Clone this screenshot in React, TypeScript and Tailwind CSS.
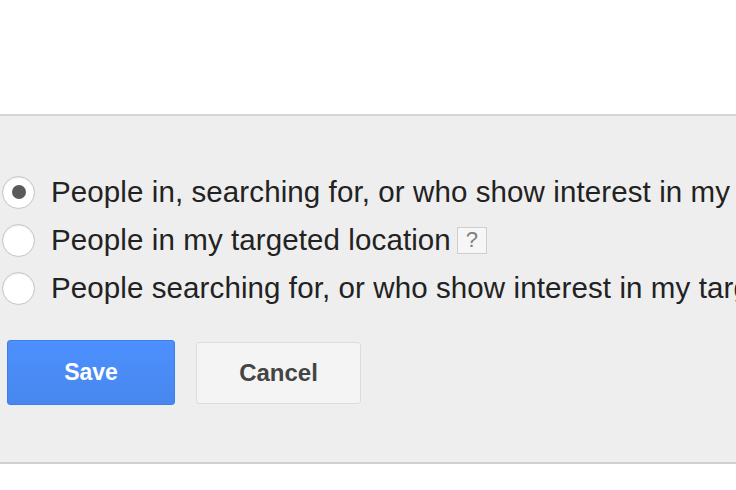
export default function App() {
  const options = [
    "People in, searching for, or who show interest in my targeted location (recommended)",
    "People in my targeted location",
    "People searching for, or who show interest in my targeted location",
  ];

  return (
    <div className="w-[736px] h-[490px] overflow-hidden bg-white font-['Liberation_Sans',Arial,sans-serif]">
      <div className="h-[114px]" />
      <div className="border-t-2 border-b-2 border-t-[#d6d6d6] border-b-[#d0d0d0] bg-[#eeeeee] pt-[52px] pb-[57px]">
        <div className="flex flex-col">
          {options.map((label, i) => (
            <div key={i} className="flex h-[48px] items-center whitespace-nowrap">
              <span className="ml-[2px] flex h-[33px] w-[33px] shrink-0 items-center justify-center rounded-full border border-[#c4c4c4] bg-white shadow-[inset_0_1px_2px_rgba(0,0,0,0.08)]">
                {i === 0 && <span className="h-[14px] w-[14px] rounded-full bg-[#5a5a5a]" />}
              </span>
              <span className="ml-[16px] text-[29.5px] leading-none tracking-[0.1px] text-[#222]">{label}</span>
              {i === 1 && (
                <span className="ml-[6px] flex h-[27px] w-[30px] items-center justify-center border border-[#cfcfcf] bg-[#f6f6f6] text-[22px] leading-none text-[#808080]">
                  ?
                </span>
              )}
            </div>
          ))}
        </div>
        <div className="mt-[28px] flex items-center gap-[21px] pl-[7px]">
          <button className="h-[65px] w-[168px] rounded-[3px] border border-[#3b7ef0] bg-gradient-to-b from-[#4d90fe] to-[#4787ed] text-[23px] font-bold text-white">
            Save
          </button>
          <button className="h-[62px] w-[165px] rounded-[3px] border border-[#dcdcdc] bg-[#f4f4f4] text-[24px] font-bold text-[#444]">
            Cancel
          </button>
        </div>
      </div>
    </div>
  );
}
